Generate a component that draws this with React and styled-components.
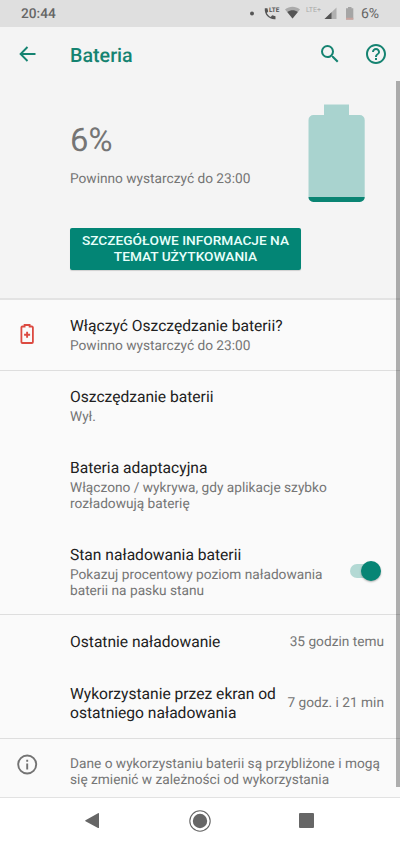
import React, { useState } from 'react';
import styled, { createGlobalStyle } from 'styled-components';

const GlobalStyle = createGlobalStyle`
  * {
    margin: 0;
    padding: 0;
    box-sizing: border-box;
  }
  body {
    font-family: Roboto, 'Noto Sans', sans-serif;
    background: #fafafa;
    color: #212121;
    text-rendering: geometricPrecision;
  }
`;

const Screen = styled.div`
  width: 400px;
  height: 844px;
  display: flex;
  flex-direction: column;
  overflow: hidden;
  background: #fafafa;
`;

const StatusBar = styled.div`
  height: 27px;
  flex-shrink: 0;
  display: flex;
  justify-content: space-between;
  padding: 0 21px 0 21px;
  background: #dfdfdf;
  color: #666;
  font-size: 14px;
  line-height: 29px;
`;

const Clock = styled.span`
  font-weight: 500;
  font-size: 13.7px;
`;

const StatusIcons = styled.div`
  display: flex;
  gap: 3px;
`;

const AppBar = styled.header`
  height: 54px;
  flex-shrink: 0;
  display: flex;
  align-items: center;
  padding: 0 12px 0 16px;
  background: #f4f4f4;
  color: #158371;

  svg {
    flex-shrink: 0;
  }
`;

const Heading = styled.h1`
  flex: 1;
  margin: 4px 0 0 31px;
  font-size: 19.7px;
  font-weight: 500;
  line-height: 24px;
`;

const Actions = styled.div`
  display: flex;
  gap: 22px;
`;

const Content = styled.main`
  position: relative;
  height: 716px;
  flex-shrink: 0;
`;

const ScrollThumb = styled.div`
  position: absolute;
  top: 0;
  right: 0;
  width: 4px;
  height: 706px;
  background: rgba(0, 0, 0, 0.3);
`;

const Hero = styled.section`
  height: 219px;
  display: flex;
  justify-content: space-between;
  padding: 22px 35px 0 70px;
  background: #f4f4f4;
  border-bottom: 2px solid #e3e3e3;
`;

const Percent = styled.div`
  margin-top: 18px;
  font-size: 32.8px;
  line-height: 40px;
  color: #757575;
`;

const Estimate = styled.div`
  margin-top: 10px;
  font-size: 13.7px;
  line-height: 16px;
  color: #757575;
`;

const UsageButton = styled.button`
  width: 231px;
  height: 42px;
  margin-top: 41px;
  padding-bottom: 2px;
  border: none;
  border-radius: 2px;
  background: #038575;
  color: #e8fffb;
  font-family: inherit;
  font-size: 13.7px;
  font-weight: 500;
  line-height: 16px;
  box-shadow: 0 1px 1px rgba(0, 0, 0, 0.15);
  white-space: nowrap;
`;

const Row = styled.div`
  display: flex;
  align-items: center;
  height: ${(props) => props.$height}px;
  padding: ${(props) => props.$top || 0}px ${(props) => props.$right || 16}px ${(props) => props.$bottom || 0}px 0;
  border-bottom: ${(props) => (props.$divider ? '1px solid #dedede' : 'none')};
`;

const IconSlot = styled.div`
  width: 70px;
  padding: 0 0 ${(props) => props.$raise || 0}px 16px;
  flex-shrink: 0;
  display: flex;
`;

const Labels = styled.div`
  flex: 1;
  padding-top: 2px;
  white-space: nowrap;
`;

const Title = styled.div`
  font-size: 15.6px;
  line-height: 19px;
`;

const Summary = styled.div`
  margin-top: ${(props) => (props.$flush ? 0 : 2)}px;
  font-size: 13.7px;
  line-height: 16px;
  color: #757575;
`;

const Value = styled.div`
  font-size: 13.7px;
  line-height: 16px;
  color: #757575;
  white-space: nowrap;
`;

const Track = styled.button`
  width: 31px;
  height: 22px;
  padding-bottom: 2px;
  display: flex;
  align-items: center;
  justify-content: ${(props) => (props.$on ? 'flex-end' : 'flex-start')};
  border: none;
  background: none;

  &::before {
    content: '';
    width: 26px;
    height: 14px;
    margin-right: -15px;
    border-radius: 7px;
    background: #b3d9d4;
  }
`;

const Knob = styled.span`
  position: relative;
  width: 20px;
  height: 20px;
  border-radius: 50%;
  background: ${(props) => (props.$on ? '#078575' : '#f1f1f1')};
  box-shadow: 0 1px 2px rgba(0, 0, 0, 0.3);
`;

const NavBar = styled.nav`
  flex: 1;
  display: flex;
  justify-content: space-between;
  align-items: center;
  padding: 0 85px 1px 84px;
  border-top: 1px solid #e2e2e2;
  background: #fff;
`;

const StatusGlyphs = () => (
  <svg width="109" height="27" viewBox="249 0 109 27">
    <circle cx="252" cy="13.5" r="2" fill="#555" />
    <path
      d="M264.800 8.300h2.600l.8 3.300-1.400 1.500c.9 1.900 2 3 3.900 3.900l1.500-1.700 3.300.9v3c-6.400.6-11.300-4.500-10.700-10.900z"
      fill="#555"
    />
    <text x="269" y="12" fontSize="6.400" fontWeight="700" fill="#555">LTE</text>
    <path d="M285 9.500c4.500-3.600 10.500-3.600 15 0l-7.500 9z" fill="#aaa" />
    <path d="M287.300 12c3.200-2.200 7.500-2.200 10.500 0l-5.300 6.500z" fill="#555" />
    <text x="306" y="12" fontSize="7" fill="#aaa">LTE+</text>
    <path d="M336.500 7.500v11.500h-12z" fill="#b0b0b0" />
    <path d="M331.500 12.300v6.700h-7z" fill="#555" />
    <path d="M348 7h3.500v1.300h1.800V19.500h-7.300V8.300h2z" fill="#a5a5a5" />
    <path d="M346 17.800h7.300v1.900h-7.300z" fill="#c9a49e" />
  </svg>
);

const BackIcon = () => (
  <svg width="23" height="24" viewBox="0 0 23 24" fill="none" stroke="currentColor" strokeWidth="1.9">
    <path d="M19.500 12H5M11.500 5L4.600 12l6.900 7" />
  </svg>
);

const SearchIcon = () => (
  <svg width="24" height="24" viewBox="0 0 24 24" fill="currentColor">
    <path d="M15.500 14h-.79l-.28-.27A6.470 6.470 0 0 0 16 9.500 6.500 6.500 0 1 0 9.500 16c1.610 0 3.090-.59 4.230-1.570l.27.28v.79l5 4.990L20.490 19l-4.990-5zm-6 0C7.010 14 5 11.990 5 9.500S7.010 5 9.500 5 14 7.010 14 9.500 11.990 14 9.500 14z" />
  </svg>
);

const HelpIcon = () => (
  <svg width="24" height="24" viewBox="0 0 24 24" fill="currentColor">
    <path d="M11 18h2v-2h-2v2zm1-16C6.480 2 2 6.480 2 12s4.480 10 10 10 10-4.480 10-10S17.520 2 12 2zm0 18c-4.410 0-8-3.590-8-8s3.590-8 8-8 8 3.590 8 8-3.590 8-8 8zm0-14c-2.210 0-4 1.790-4 4h2c0-1.100.9-2 2-2s2 .9 2 2c0 2-3 1.750-3 5h2c0-2.250 3-2.500 3-5 0-2.210-1.790-4-4-4z" />
  </svg>
);

const BatteryMeter = () => (
  <svg width="57" height="99" viewBox="0 0 57 99">
    <path
      d="M16 1.500h25v10.500H51.700a5 5 0 0 1 5 5V94a5 5 0 0 1-5 5H5.500a5 5 0 0 1-5-5V17a5 5 0 0 1 5-5H16z"
      fill="#a9d3cf"
    />
    <path d="M.5 94h56.200a5 5 0 0 1-5 5H5.500a5 5 0 0 1-5-5z" fill="#0a8473" />
  </svg>
);

const SaverIcon = () => (
  <svg width="23" height="24" viewBox="0 0 23 24" fill="none" stroke="#dc4a41">
    <path d="M8.600 4.500V3h5v1.500h2.300a1 1 0 0 1 1 1V20a1 1 0 0 1-1 1H6.400a1 1 0 0 1-1-1V5.500a1 1 0 0 1 1-1z" strokeWidth="1.800" />
    <path d="M11.100 9.700v6M8.100 12.700h6" strokeWidth="1.900" />
  </svg>
);

const InfoIcon = () => (
  <svg width="23" height="23" viewBox="0 0 23 23" fill="none" stroke="#737373" strokeWidth="1.900">
    <circle cx="11.200" cy="11.500" r="9" />
    <path d="M11.200 10.500v6M11.200 6.700v2" />
  </svg>
);

function App() {
  const [showPercent, setShowPercent] = useState(true);

  return (
    <>
      <GlobalStyle />
      <Screen>
        <StatusBar>
          <Clock>20:44</Clock>
          <StatusIcons>
            <StatusGlyphs />
            <span>6%</span>
          </StatusIcons>
        </StatusBar>
        <AppBar>
          <BackIcon />
          <Heading>Bateria</Heading>
          <Actions>
            <SearchIcon />
            <HelpIcon />
          </Actions>
        </AppBar>
        <Content>
          <Hero>
            <div>
              <Percent>6%</Percent>
              <Estimate>Powinno wystarczyć do 23:00</Estimate>
              <UsageButton>
                SZCZEGÓŁOWE INFORMACJE NA
                <br />
                TEMAT UŻYTKOWANIA
              </UsageButton>
            </div>
            <BatteryMeter />
          </Hero>
          <Row $height={71} $bottom={1} $divider>
            <IconSlot $raise={1}>
              <SaverIcon />
            </IconSlot>
            <Labels>
              <Title>Włączyć Oszczędzanie baterii?</Title>
              <Summary>Powinno wystarczyć do 23:00</Summary>
            </Labels>
          </Row>
          <Row $height={71} $bottom={2}>
            <IconSlot />
            <Labels>
              <Title>Oszczędzanie baterii</Title>
              <Summary>Wył.</Summary>
            </Labels>
          </Row>
          <Row $height={87} $bottom={2}>
            <IconSlot />
            <Labels>
              <Title>Bateria adaptacyjna</Title>
              <Summary>
                Włączono / wykrywa, gdy aplikacje szybko
                <br />
                rozładowują baterię
              </Summary>
            </Labels>
          </Row>
          <Row $height={86} $right={19} $divider>
            <IconSlot />
            <Labels>
              <Title>Stan naładowania baterii</Title>
              <Summary>
                Pokazuj procentowy poziom naładowania
                <br />
                baterii na pasku stanu
              </Summary>
            </Labels>
            <Track $on={showPercent} onClick={() => setShowPercent(!showPercent)}>
              <Knob $on={showPercent} />
            </Track>
          </Row>
          <Row $height={53}>
            <IconSlot />
            <Labels>
              <Title>Ostatnie naładowanie</Title>
            </Labels>
            <Value>35 godzin temu</Value>
          </Row>
          <Row $height={71} $divider>
            <IconSlot />
            <Labels>
              <Title>
                Wykorzystanie przez ekran od
                <br />
                ostatniego naładowania
              </Title>
            </Labels>
            <Value>7 godz. i 21 min</Value>
          </Row>
          <Row $height={58} $top={5}>
            <IconSlot $raise={13}>
              <InfoIcon />
            </IconSlot>
            <Labels>
              <Summary $flush>
                Dane o wykorzystaniu baterii są przybliżone i mogą
                <br />
                się zmienić w zależności od wykorzystania
              </Summary>
            </Labels>
          </Row>
          <ScrollThumb />
        </Content>
        <NavBar>
          <svg width="17" height="18" viewBox="0 0 17 18" fill="#666">
            <path d="M1.500 8.300L14 1.200q1-.5 1 .6v13.600q0 1.100-1 .5L1.500 9.300q-.8-.5 0-1z" />
          </svg>
          <svg width="24" height="24" viewBox="0 0 24 24">
            <circle cx="12" cy="12" r="10.200" fill="none" stroke="#666" strokeWidth="1.100" />
            <circle cx="12" cy="12" r="7.200" fill="#666" />
          </svg>
          <svg width="17" height="17" viewBox="0 0 17 17">
            <rect x="1" y="1" width="15" height="15" rx="1" fill="#666" />
          </svg>
        </NavBar>
      </Screen>
    </>
  );
}

export default App;
